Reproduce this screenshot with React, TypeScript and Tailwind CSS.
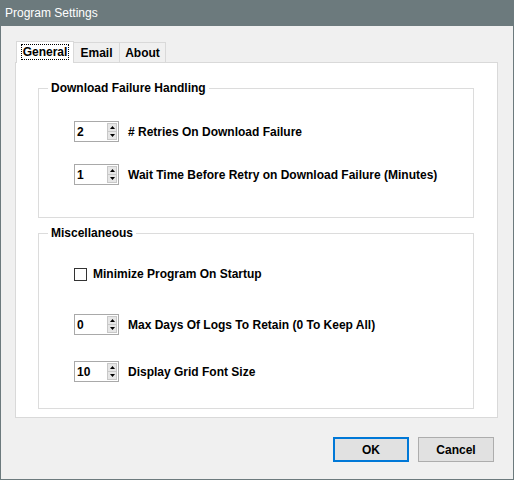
import React from 'react';

const font = { fontFamily: '"Liberation Sans", Arial, sans-serif' };

const Spinner: React.FC<{ value: string }> = ({ value }) => (
  <div className="w-[45px] h-[21px] border border-[#a9a9a9] bg-white flex items-center">
    <span className="pl-[2px] text-[12px] font-bold text-black flex-1">{value}</span>
    <div className="w-[10px] h-[17px] mr-[1px] flex flex-col">
      <div className="flex-1 bg-[#e6e6e6] border border-[#c8c8c8] flex items-center justify-center">
        <svg width="5" height="3" viewBox="0 0 5 3"><path d="M2.5 0 L5 3 L0 3 Z" fill="#000" /></svg>
      </div>
      <div className="flex-1 bg-[#e6e6e6] border border-t-0 border-[#c8c8c8] flex items-center justify-center">
        <svg width="5" height="3" viewBox="0 0 5 3"><path d="M0 0 L5 0 L2.5 3 Z" fill="#000" /></svg>
      </div>
    </div>
  </div>
);

const SpinRow: React.FC<{ value: string; label: string }> = ({ value, label }) => (
  <div className="flex items-center gap-[9px] ml-[35px]">
    <Spinner value={value} />
    <span className="text-[12px] font-bold text-black">{label}</span>
  </div>
);

const Group: React.FC<{ title: string; className: string; children: React.ReactNode }> = ({ title, className, children }) => (
  <fieldset className={`border border-[#dcdcdc] ${className}`}>
    <legend className="ml-[9px] px-[3px] text-[12px] font-bold text-black leading-[14px]">{title}</legend>
    {children}
  </fieldset>
);

export default function App() {
  return (
    <div className="w-[514px] h-[480px] bg-[#6c7a7d] flex flex-col" style={font}>
      <div className="h-[26px] flex items-center pl-[5px] text-white text-[12px]">Program Settings</div>
      <div className="flex-1 mx-[1px] mb-[1px] bg-[#f0f0f0] flex flex-col pl-[14px] pt-[15px]">
        <div className="flex items-end h-[22px] relative z-10">
          <div className="w-[58px] h-[22px] ml-[1px] bg-white border border-b-0 border-[#d9d9d9] flex items-start justify-center pt-[3px]">
            <span className="text-[12px] font-bold text-black px-[1px] outline outline-1 outline-dotted outline-black leading-[14px]">General</span>
          </div>
          <div className="w-[46px] h-[21px] bg-[#f0f0f0] border border-l-0 border-[#d9d9d9] flex items-center justify-center pt-[1px] text-[12px] font-bold text-black">Email</div>
          <div className="w-[46px] h-[21px] bg-[#f0f0f0] border border-l-0 border-[#d9d9d9] flex items-center justify-center pt-[1px] text-[12px] font-bold text-black">About</div>
        </div>
        <div className="w-[483px] h-[356px] -mt-[1px] bg-white border border-[#d9d9d9] flex flex-col pl-[22px] pt-[18px]">
          <Group title="Download Failure Handling" className="w-[436px] h-[137px] pt-[26px] flex flex-col gap-[22px]">
            <SpinRow value="2" label="# Retries On Download Failure" />
            <SpinRow value="1" label="Wait Time Before Retry on Download Failure (Minutes)" />
          </Group>
          <Group title="Miscellaneous" className="w-[436px] h-[183px] mt-[8px] pt-[25px] flex flex-col">
            <div className="flex items-center gap-[6px] ml-[35px]">
              <div className="w-[13px] h-[13px] border border-[#333] bg-white" />
              <span className="text-[12px] font-bold text-black">Minimize Program On Startup</span>
            </div>
            <div className="mt-[31px]"><SpinRow value="0" label="Max Days Of Logs To Retain (0 To Keep All)" /></div>
            <div className="mt-[26px]"><SpinRow value="10" label="Display Grid Font Size" /></div>
          </Group>
        </div>
        <div className="flex justify-end gap-[9px] mt-[19px] pr-[19px]">
          <button className="w-[76px] h-[25px] bg-[#e1e1e1] border-2 border-[#0078d7] text-[12px] font-bold text-black">OK</button>
          <button className="w-[76px] h-[25px] bg-[#e1e1e1] border border-[#adadad] text-[12px] font-bold text-black">Cancel</button>
        </div>
      </div>
    </div>
  );
}
